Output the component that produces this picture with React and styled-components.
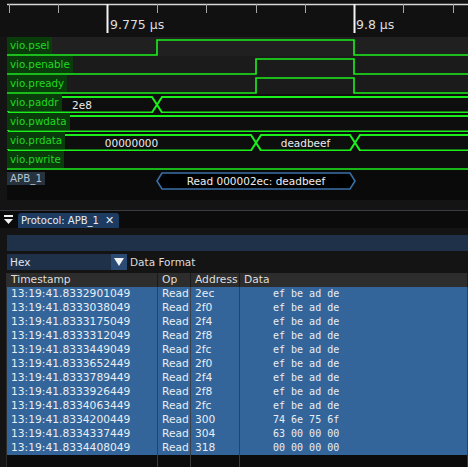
import React from "react";
import styled, { createGlobalStyle } from "styled-components";

const GlobalStyle = createGlobalStyle`
  html, body {
    margin: 0;
    padding: 0;
    background: #141414;
  }
  body {
    font-family: "DejaVu Sans", "Liberation Sans", sans-serif;
    width: 468px;
    height: 467px;
    overflow: hidden;
  }
`;

const GREEN = "#1cf01c";
const VIEW = "7 0 461 19";

const Page = styled.div`
  width: 468px;
  height: 467px;
  display: flex;
  flex-direction: column;
  background: #141414;
`;

/* ---- trace view ---- */

const Ruler = styled.div`
  position: relative;
  height: 37px;
  background: #111;
`;

const TickLabel = styled.span`
  position: absolute;
  top: 17px;
  left: ${(p) => p.x}px;
  font-size: 12.5px;
  color: #dcdcdc;
  line-height: 16px;
  white-space: nowrap;
`;

const Rows = styled.div`
  margin-left: 7px;
  display: flex;
  flex-direction: column;
`;

const SignalRow = styled.div`
  position: relative;
  height: 19px;
  background: ${(p) => p.bg || "#0e0e0e"};
`;

const SignalLabel = styled.span`
  position: absolute;
  left: 0;
  top: 0;
  height: 17px;
  padding: 0 3px;
  background: #0a3b0a;
  color: #22d822;
  font-size: 10.3px;
  line-height: 17px;
  white-space: nowrap;
`;

const DecoderRow = styled.div`
  position: relative;
  height: 30px;
  background: #0a0a0a;
`;

const DecoderLabel = styled.span`
  position: absolute;
  left: 0;
  top: 2px;
  height: 13px;
  padding: 0 3px;
  background: #27323c;
  color: #b4c2d0;
  font-size: 10.3px;
  line-height: 13px;
`;

const Spacer = styled.div`
  height: 10px;
  border-bottom: 1px solid #3a3a44;
`;

/* ---- protocol panel ---- */

const TabBar = styled.div`
  height: 16px;
  background: #0b0b0b;
  display: flex;
  align-items: flex-end;
  gap: 5px;
  padding: 1px 0 0 4px;
`;

const Tab = styled.div`
  height: 15px;
  padding: 0 5px 0 3px;
  display: flex;
  align-items: center;
  gap: 6px;
  background: #1d3a60;
  border-radius: 3px 3px 0 0;
  color: #e6ecf2;
  font-size: 10px;
`;

const Panel = styled.div`
  margin-left: 7px;
  display: flex;
  flex-direction: column;
  padding-top: 7px;
  gap: 3px;
`;

const InfoBar = styled.div`
  height: 16px;
  background: #1f3049;
`;

const FormatRow = styled.div`
  height: 16px;
  display: flex;
  align-items: center;
  gap: 3px;
  color: #dcdcdc;
  font-size: 10.5px;
`;

const Select = styled.div`
  width: 120px;
  height: 16px;
  display: flex;
  background: #1f3049;
  color: #e0e6ee;
`;

const SelectText = styled.span`
  flex: 1;
  padding-left: 3px;
  line-height: 16px;
`;

const SelectButton = styled.span`
  width: 16px;
  background: #2b4a74;
  display: flex;
  align-items: center;
  justify-content: center;
`;

const Table = styled.div`
  display: grid;
  grid-template-columns: 151px 33px 49px 1fr;
  border-left: 1px solid #2c2c2c;
  margin-left: -1px;
`;

const HeadCell = styled.div`
  height: 14px;
  line-height: 14px;
  padding-left: 4px;
  background: #2d2d2d;
  color: #dedede;
  font-size: 10.7px;
  border-right: 1px solid #1a1a1a;
  white-space: nowrap;
  overflow: hidden;
`;

const Cell = styled.div`
  height: 14px;
  line-height: 14px;
  padding-left: ${(p) => p.pad || 4}px;
  background: #33659a;
  color: #e9eef4;
  font-size: 10.7px;
  font-family: ${(p) =>
    p.mono ? '"DejaVu Sans Mono", "Liberation Mono", monospace' : "inherit"};
  font-size: ${(p) => (p.mono ? "10px" : "10.7px")};
  border-right: 1px solid #3a3f45;
  white-space: pre;
  overflow: hidden;
`;

const EmptyCell = styled.div`
  height: 12px;
  background: #0b0b0b;
  border-right: 1px solid #3a3a3a;
`;

/* ---- drawings ---- */

function LogicTrace({ edges, startHigh = false }) {
  // edges: x positions where the level flips
  const hi = 3;
  const lo = 18;
  let level = startHigh;
  let d = `M4 ${level ? hi : lo}`;
  edges.forEach((x) => {
    d += ` H${x}`;
    level = !level;
    d += ` V${level ? hi : lo}`;
  });
  d += " H475";
  return (
    <svg width="461" height="19" viewBox={VIEW} style={{ display: "block" }}>
      <path d={d} fill="none" stroke={GREEN} strokeWidth="1.6" />
    </svg>
  );
}

function BusTrace({ segments }) {
  // segments: [x1, x2, text]
  const top = 3;
  const bot = 18.5;
  const mid = (top + bot) / 2;
  const h = 5;
  return (
    <svg width="461" height="19" viewBox={VIEW} style={{ display: "block" }}>
      {segments.map(([x1, x2, text], i) => (
        <g key={i}>
          <polygon
            points={`${x1},${mid} ${x1 + h},${top} ${x2 - h},${top} ${x2},${mid} ${x2 - h},${bot} ${x1 + h},${bot}`}
            fill="none"
            stroke={GREEN}
            strokeWidth="2"
          />
          {text && (
            <text
              x={(Math.max(x1, 7) + x2) / 2}
              y={mid + 3.8}
              textAnchor="middle"
              fill="#ececec"
              fontSize="10.5"
              fontFamily="DejaVu Sans, sans-serif"
            >
              {text}
            </text>
          )}
        </g>
      ))}
    </svg>
  );
}

function Annotation() {
  const x1 = 157;
  const x2 = 355;
  const top = 3;
  const bot = 19;
  const mid = 11;
  const h = 5;
  return (
    <svg width="461" height="30" viewBox="7 0 461 30" style={{ display: "block" }}>
      <polygon
        points={`${x1},${mid} ${x1 + h},${top} ${x2 - h},${top} ${x2},${mid} ${x2 - h},${bot} ${x1 + h},${bot}`}
        fill="#000"
        stroke="#3a6fa6"
        strokeWidth="1.6"
      />
      <text
        x={(x1 + x2) / 2}
        y={mid + 3.8}
        textAnchor="middle"
        fill="#eeeeee"
        fontSize="10.5"
        fontFamily="DejaVu Sans, sans-serif"
      >
        Read 000002ec: deadbeef
      </text>
    </svg>
  );
}

function RulerTicks() {
  const minor = [9, 58, 157, 206, 256, 305, 403, 453];
  return (
    <svg width="468" height="37" style={{ position: "absolute", left: 0, top: 0 }}>
      <line x1="7" y1="4.5" x2="468" y2="4.5" stroke="#d8d8d8" strokeWidth="1.3" />
      {minor.map((x) => (
        <line key={x} x1={x + 0.5} y1="4" x2={x + 0.5} y2="13" stroke="#a8a8a8" strokeWidth="1" />
      ))}
      {[107, 354].map((x) => (
        <line key={x} x1={x + 0.5} y1="4" x2={x + 0.5} y2="33" stroke="#f4f4f4" strokeWidth="2" />
      ))}
    </svg>
  );
}

function PanelIcon() {
  return (
    <svg width="9" height="10" viewBox="0 0 9 10" style={{ marginBottom: 3 }}>
      <rect x="0" y="0" width="9" height="2" fill="#f2f2f2" />
      <polygon points="0,4 9,4 4.5,9" fill="#f2f2f2" />
    </svg>
  );
}

function DownArrow() {
  return (
    <svg width="10" height="8" viewBox="0 0 10 8">
      <polygon points="0,0 10,0 5,8" fill="#f4f4f4" />
    </svg>
  );
}

const rows = [
  ["13:19:41.8332901049", "2ec", "ef be ad de"],
  ["13:19:41.8333038049", "2f0", "ef be ad de"],
  ["13:19:41.8333175049", "2f4", "ef be ad de"],
  ["13:19:41.8333312049", "2f8", "ef be ad de"],
  ["13:19:41.8333449049", "2fc", "ef be ad de"],
  ["13:19:41.8333652449", "2f0", "ef be ad de"],
  ["13:19:41.8333789449", "2f4", "ef be ad de"],
  ["13:19:41.8333926449", "2f8", "ef be ad de"],
  ["13:19:41.8334063449", "2fc", "ef be ad de"],
  ["13:19:41.8334200449", "300", "74 6e 75 6f"],
  ["13:19:41.8334337449", "304", "63 00 00 00"],
  ["13:19:41.8334408049", "318", "00 00 00 00"],
];

export default function App() {
  return (
    <Page>
      <GlobalStyle />
      <Ruler>
        <RulerTicks />
        <TickLabel x={110}>9.775 µs</TickLabel>
        <TickLabel x={356}>9.8 µs</TickLabel>
      </Ruler>

      <Rows>
        <SignalRow bg="#202020">
          <LogicTrace edges={[157, 354]} />
          <SignalLabel>vio.psel</SignalLabel>
        </SignalRow>
        <SignalRow bg="#1b1b1b">
          <LogicTrace edges={[256, 354]} />
          <SignalLabel>vio.penable</SignalLabel>
        </SignalRow>
        <SignalRow bg="#1b1b1b">
          <LogicTrace edges={[256, 354]} />
          <SignalLabel>vio.pready</SignalLabel>
        </SignalRow>
        <SignalRow>
          <BusTrace segments={[[4, 157, "2e8"], [157, 480]]} />
          <SignalLabel>vio.paddr</SignalLabel>
        </SignalRow>
        <SignalRow>
          <BusTrace segments={[[4, 480]]} />
          <SignalLabel>vio.pwdata</SignalLabel>
        </SignalRow>
        <SignalRow>
          <BusTrace
            segments={[
              [4, 256, "00000000"],
              [256, 355, "deadbeef"],
              [355, 480],
            ]}
          />
          <SignalLabel>vio.prdata</SignalLabel>
        </SignalRow>
        <SignalRow>
          <LogicTrace edges={[]} />
          <SignalLabel>vio.pwrite</SignalLabel>
        </SignalRow>
        <DecoderRow>
          <Annotation />
          <DecoderLabel>APB_1</DecoderLabel>
        </DecoderRow>
      </Rows>

      <Spacer />

      <TabBar>
        <PanelIcon />
        <Tab>
          Protocol: APB_1
          <span style={{ fontSize: 11 }}>✕</span>
        </Tab>
      </TabBar>

      <Panel>
        <InfoBar />
        <FormatRow>
          <Select>
            <SelectText>Hex</SelectText>
            <SelectButton>
              <DownArrow />
            </SelectButton>
          </Select>
          Data Format
        </FormatRow>
        <Table>
          <HeadCell>Timestamp</HeadCell>
          <HeadCell>Op</HeadCell>
          <HeadCell>Address</HeadCell>
          <HeadCell>Data</HeadCell>
          {rows.map(([ts, addr, data]) => (
            <React.Fragment key={ts}>
              <Cell>{ts}</Cell>
              <Cell>Read</Cell>
              <Cell>{addr}</Cell>
              <Cell mono pad={33}>
                {data}
              </Cell>
            </React.Fragment>
          ))}
          <EmptyCell />
          <EmptyCell />
          <EmptyCell />
          <EmptyCell />
        </Table>
      </Panel>
    </Page>
  );
}
